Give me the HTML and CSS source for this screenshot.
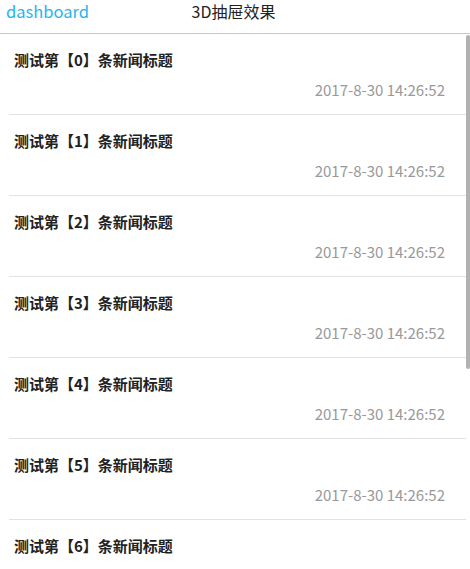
FILE: index.html
```html
<!DOCTYPE html>
<html lang="zh">
<head>
<meta charset="utf-8">
<title>3D抽屉效果</title>
<link rel="stylesheet" href="styles.css">
</head>
<body>
<header class="topbar">
  <a class="back">dashboard</a>
  <h1 class="title">3D抽屉效果</h1>
  <span class="spacer"></span>
</header>
<div class="scroller">
  <main class="list">
    <div class="item"><div class="item-title">测试第【0】条新闻标题</div><div class="item-date">2017-8-30 14:26:52</div></div>
    <div class="item"><div class="item-title">测试第【1】条新闻标题</div><div class="item-date">2017-8-30 14:26:52</div></div>
    <div class="item"><div class="item-title">测试第【2】条新闻标题</div><div class="item-date">2017-8-30 14:26:52</div></div>
    <div class="item"><div class="item-title">测试第【3】条新闻标题</div><div class="item-date">2017-8-30 14:26:52</div></div>
    <div class="item"><div class="item-title">测试第【4】条新闻标题</div><div class="item-date">2017-8-30 14:26:52</div></div>
    <div class="item"><div class="item-title">测试第【5】条新闻标题</div><div class="item-date">2017-8-30 14:26:52</div></div>
    <div class="item"><div class="item-title">测试第【6】条新闻标题</div><div class="item-date">2017-8-30 14:26:52</div></div>
  </main>
  <div class="thumb"></div>
</div>
</body>
</html>
```
FILE: styles.css
```css
html, body {
  margin: 0;
  padding: 0;
  height: 100%;
  overflow: hidden;
  background: #fff;
  font-family: "Noto Sans CJK SC", "Noto Sans", sans-serif;
}

.topbar {
  height: 33px;
  border-bottom: 1px solid #c8c8c8;
  display: grid;
  grid-template-columns: 1fr auto 1fr;
  align-items: center;
}

.back {
  padding-left: 6px;
  font-size: 16.5px;
  line-height: 24px;
  color: #27b5ee;
  margin-top: -11px;
}

.title {
  margin: -11px 3px 0 0;
  font-size: 16px;
  font-weight: normal;
  line-height: 24px;
  color: #222;
}

.scroller {
  position: relative;
  height: 535px;
  overflow: hidden;
}

.list {
  padding: 0 4px 0 9px;
}

.thumb {
  position: absolute;
  top: 1px;
  right: 0;
  width: 4px;
  height: 334px;
  border-radius: 2px;
  background: #b2b2b2;
}

.item {
  padding: 16px 21px 14px 5px;
  border-bottom: 1px solid #e2e2e2;
}

.item-title {
  font-size: 15px;
  line-height: 20px;
  font-weight: bold;
  color: #222;
}

.item-date {
  margin-top: 10px;
  font-size: 15px;
  line-height: 20px;
  color: #999;
  text-align: right;
}
```
